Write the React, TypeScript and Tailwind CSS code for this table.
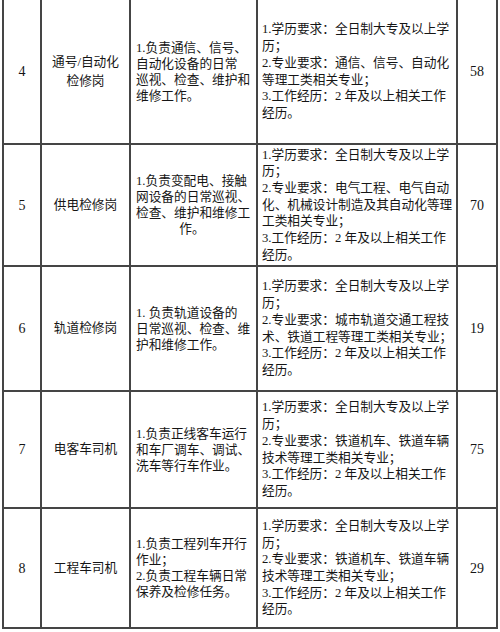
const rows = [
  {
    no: "4",
    name: ["通号/自动化", "检修岗"],
    duty: ["1.负责通信、信号、", "自动化设备的日常", "巡视、检查、维护和", "维修工作。"],
    lastCenter: false,
    req: [
      "1.学历要求：全日制大专及以上学",
      "历；",
      "2.专业要求：通信、信号、自动化",
      "等理工类相关专业；",
      "3.工作经历：2 年及以上相关工作",
      "经历。",
    ],
    count: "58",
    h: "h-[145px]",
  },
  {
    no: "5",
    name: ["供电检修岗"],
    duty: ["1.负责变配电、接触", "网设备的日常巡视、", "检查、维护和维修工", "作。"],
    lastCenter: true,
    req: [
      "1.学历要求：全日制大专及以上学",
      "历；",
      "2.专业要求：电气工程、电气自动",
      "化、机械设计制造及其自动化等理",
      "工类相关专业；",
      "3.工作经历：2 年及以上相关工作",
      "经历。",
    ],
    count: "70",
    h: "h-[122px]",
  },
  {
    no: "6",
    name: ["轨道检修岗"],
    duty: ["1. 负责轨道设备的", "日常巡视、检查、维", "护和维修工作。"],
    lastCenter: false,
    req: [
      "1.学历要求：全日制大专及以上学",
      "历；",
      "2.专业要求：城市轨道交通工程技",
      "术、铁道工程等理工类相关专业；",
      "3.工作经历：2 年及以上相关工作",
      "经历。",
    ],
    count: "19",
    h: "h-[125px]",
  },
  {
    no: "7",
    name: ["电客车司机"],
    duty: ["1.负责正线客车运行", "和车厂调车、调试、", "洗车等行车作业。"],
    lastCenter: false,
    req: [
      "1.学历要求：全日制大专及以上学",
      "历；",
      "2.专业要求：铁道机车、铁道车辆",
      "技术等理工类相关专业；",
      "3.工作经历：2 年及以上相关工作",
      "经历。",
    ],
    count: "75",
    h: "h-[117px]",
  },
  {
    no: "8",
    name: ["工程车司机"],
    duty: ["1.负责工程列车开行", "作业；", "2.负责工程车辆日常", "保养及检修任务。"],
    lastCenter: false,
    req: [
      "1.学历要求：全日制大专及以上学",
      "历；",
      "2.专业要求：铁道机车、铁道车辆",
      "技术等理工类相关专业；",
      "3.工作经历：2 年及以上相关工作",
      "经历。",
    ],
    count: "29",
    h: "h-[120px]",
  },
];

const cell = "border-r-2 border-b-2 border-[#454545] flex items-center";

export default function App() {
  return (
    <div className="w-[500px] h-[632px] bg-white overflow-hidden">
      <div
        className="ml-[2px] w-[496px] border-l-2 border-[#454545] text-[#151515] text-[12.7px]"
        style={{ fontFamily: '"Liberation Serif", "Noto Sans CJK SC", serif' }}
      >
        {rows.map((r) => (
          <div key={r.no} className={`grid grid-cols-[38px_89px_127px_200px_40px] ${r.h}`}>
            <div className={`${cell} justify-center text-[14px]`}>{r.no}</div>
            <div className={`${cell} justify-center`}>
              <div className="text-center leading-[19px]">
                {r.name.map((t) => (
                  <div key={t} className="whitespace-nowrap">{t}</div>
                ))}
              </div>
            </div>
            <div className={`${cell} pl-[5px]`}>
              <div className="w-full leading-[16px]">
                {r.duty.map((t, i) => (
                  <div
                    key={t}
                    className={`whitespace-nowrap ${
                      r.lastCenter && i === r.duty.length - 1 ? "text-center pr-[8px]" : ""
                    }`}
                  >
                    {t}
                  </div>
                ))}
              </div>
            </div>
            <div className={`${cell} pl-[4px]`}>
              <div className="leading-[16.7px]">
                {r.req.map((t, i) => (
                  <div key={i} className="whitespace-nowrap">{t}</div>
                ))}
              </div>
            </div>
            <div className={`${cell} justify-center text-[14px]`}>{r.count}</div>
          </div>
        ))}
      </div>
    </div>
  );
}
